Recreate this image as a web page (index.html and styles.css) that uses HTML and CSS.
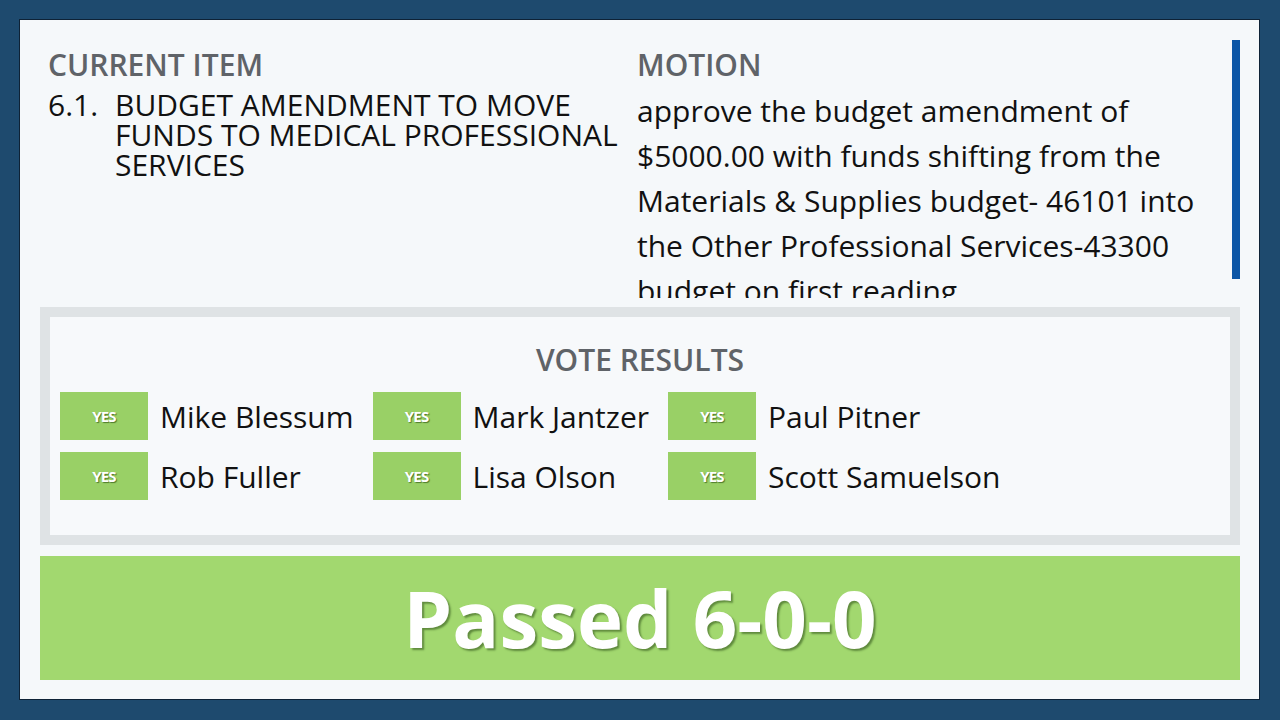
FILE: index.html
```html
<!DOCTYPE html>
<html>
<head>
<meta charset="utf-8">
<link rel="stylesheet" href="styles.css">
</head>
<body>
<div class="panel">
  <div class="top">
    <div class="col col-item">
      <div class="heading">CURRENT ITEM</div>
      <div class="item">
        <span class="item-num">6.1.</span>
        <span class="item-title">BUDGET AMENDMENT TO MOVE FUNDS TO MEDICAL PROFESSIONAL SERVICES</span>
      </div>
    </div>
    <div class="col col-motion">
      <div class="heading">MOTION</div>
      <div class="motion">approve the budget amendment of $5000.00 with funds shifting from the Materials &amp; Supplies budget- 46101 into the Other Professional Services-43300 budget on first reading</div>
    </div>
    <div class="scroll-thumb"></div>
  </div>
  <div class="votes">
    <div class="votes-inner">
      <div class="votes-title">VOTE RESULTS</div>
      <div class="vote-grid">
        <div class="vote"><span class="badge">YES</span><span class="name">Mike Blessum</span></div>
        <div class="vote"><span class="badge">YES</span><span class="name">Mark Jantzer</span></div>
        <div class="vote"><span class="badge">YES</span><span class="name">Paul Pitner</span></div>
        <div class="vote"><span class="badge">YES</span><span class="name">Rob Fuller</span></div>
        <div class="vote"><span class="badge">YES</span><span class="name">Lisa Olson</span></div>
        <div class="vote"><span class="badge">YES</span><span class="name">Scott Samuelson</span></div>
      </div>
    </div>
  </div>
  <div class="result">Passed 6-0-0</div>
</div>
</body>
</html>
```

FILE: styles.css
```css
html, body {
  margin: 0;
  padding: 0;
}
body {
  background: #1e4a6e;
  font-family: "Open Sans", "Noto Sans", sans-serif;
  width: 1280px;
  height: 720px;
  overflow: hidden;
}
.panel {
  margin: 19px 0 0 19px;
  width: 1239px;
  height: 679px;
  border: 1px solid #0e2236;
  background: #f5f8fa;
  display: flex;
  flex-direction: column;
}
.top {
  height: 278px;
  flex: none;
  overflow: hidden;
  display: flex;
  padding: 28px 19px 0 28px;
  box-sizing: border-box;
}
.col-item {
  width: 577px;
  flex: none;
}
.col-motion {
  margin-left: 12px;
  flex: 1;
}
.scroll-thumb {
  flex: none;
  width: 8px;
  height: 239px;
  margin-top: -8px;
  margin-left: 7px;
  background: #0c56a6;
}
.heading {
  font-size: 30px;
  line-height: 34px;
  font-weight: 600;
  color: #5f6368;
}
.item {
  margin-top: 8px;
  display: flex;
  font-size: 30px;
  line-height: 30px;
  color: #111;
}
.item-num {
  width: 67px;
  flex: none;
}
.motion {
  margin-top: 6px;
  font-size: 30px;
  line-height: 45px;
  color: #111;
}
.votes {
  margin: 9px 0 0 20px;
  width: 1200px;
  border: 10px solid #dfe3e5;
  box-sizing: border-box;
  background: #f7f9fb;
}
.votes-inner {
  padding: 26px 10px 35px;
}
.votes-title {
  text-align: center;
  font-size: 30px;
  line-height: 34px;
  font-weight: 600;
  color: #5f6368;
  margin-bottom: 15px;
}
.vote-grid {
  display: grid;
  grid-template-columns: repeat(3, auto);
  justify-content: start;
  column-gap: 19px;
  row-gap: 12px;
}
.vote {
  display: flex;
  align-items: center;
}
.badge {
  width: 88px;
  height: 48px;
  background: #99d066;
  color: #fff;
  font-weight: 700;
  font-size: 15px;
  letter-spacing: -0.8px;
  display: flex;
  align-items: center;
  justify-content: center;
  text-shadow: 1px 1px 1px #4e7a2c;
  flex: none;
}
.name {
  margin-left: 12px;
  font-size: 30px;
  color: #111;
}
.result {
  margin: 11px 0 0 20px;
  width: 1200px;
  height: 124px;
  flex: none;
  background: #a2d86f;
  color: #fff;
  font-weight: 700;
  font-size: 78px;
  display: flex;
  align-items: center;
  justify-content: center;
  text-shadow: 2px 2px 2px #5f8a3d;
}
```
